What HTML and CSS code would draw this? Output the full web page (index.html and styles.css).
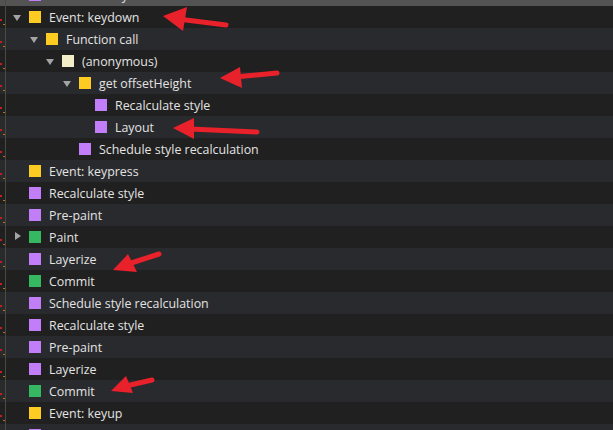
FILE: index.html
```html
<!DOCTYPE html>
<html>
<head>
<meta charset="utf-8">
<link rel="stylesheet" href="styles.css">
</head>
<body>
<div class="panel">
  <div class="gutter"></div>
  <div class="tree">
    <div class="row sel l0"><span class="tw"></span><span class="sq purple"></span><span class="lbl">Invalidate Layout</span></div>
    <div class="row dark l0"><span class="tw down"></span><span class="sq yellow"></span><span class="lbl">Event: keydown</span></div>
    <div class="row light l1"><span class="tw down"></span><span class="sq yellow"></span><span class="lbl">Function call</span></div>
    <div class="row dark l2"><span class="tw down"></span><span class="sq cream"></span><span class="lbl">(anonymous)</span></div>
    <div class="row light l3"><span class="tw down"></span><span class="sq yellow"></span><span class="lbl">get offsetHeight</span></div>
    <div class="row dark l4"><span class="tw"></span><span class="sq purple"></span><span class="lbl">Recalculate style</span></div>
    <div class="row light l4"><span class="tw"></span><span class="sq purple"></span><span class="lbl">Layout</span></div>
    <div class="row dark l3"><span class="tw"></span><span class="sq purple"></span><span class="lbl">Schedule style recalculation</span></div>
    <div class="row light l0"><span class="tw"></span><span class="sq yellow"></span><span class="lbl">Event: keypress</span></div>
    <div class="row dark l0"><span class="tw"></span><span class="sq purple"></span><span class="lbl">Recalculate style</span></div>
    <div class="row light l0"><span class="tw"></span><span class="sq purple"></span><span class="lbl">Pre-paint</span></div>
    <div class="row dark l0"><span class="tw right"></span><span class="sq green"></span><span class="lbl">Paint</span></div>
    <div class="row light l0"><span class="tw"></span><span class="sq purple"></span><span class="lbl">Layerize</span></div>
    <div class="row dark l0"><span class="tw"></span><span class="sq green"></span><span class="lbl">Commit</span></div>
    <div class="row light l0"><span class="tw"></span><span class="sq purple"></span><span class="lbl">Schedule style recalculation</span></div>
    <div class="row dark l0"><span class="tw"></span><span class="sq purple"></span><span class="lbl">Recalculate style</span></div>
    <div class="row light l0"><span class="tw"></span><span class="sq purple"></span><span class="lbl">Pre-paint</span></div>
    <div class="row dark l0"><span class="tw"></span><span class="sq purple"></span><span class="lbl">Layerize</span></div>
    <div class="row light l0"><span class="tw"></span><span class="sq green"></span><span class="lbl">Commit</span></div>
    <div class="row dark l0"><span class="tw"></span><span class="sq yellow"></span><span class="lbl">Event: keyup</span></div>
    <div class="row light l0"><span class="tw"></span><span class="sq purple"></span><span class="lbl">Layout</span></div>
  </div>
  <svg class="arrows" width="613" height="430" viewBox="0 0 613 430">
    <g fill="#e8212b" stroke="#e8212b" stroke-linecap="round" stroke-width="5">
      <line x1="178" y1="19" x2="226" y2="25"/>
      <polygon stroke="none" points="163,16 187,7 183,31"/>
      <line x1="235" y1="77" x2="277" y2="73"/>
      <polygon stroke="none" points="220,78 240,67 242,88"/>
      <line x1="190" y1="129" x2="257" y2="132"/>
      <polygon stroke="none" points="173,128 194,118 194,139"/>
      <line x1="128" y1="264" x2="159" y2="254"/>
      <polygon stroke="none" points="113,270 128,254 137,272"/>
      <line x1="126" y1="386" x2="152" y2="380"/>
      <polygon stroke="none" points="111,391 126,376 133,393"/>
    </g>
  </svg>
</div>
</body>
</html>
```
FILE: styles.css
```css
html, body {
  margin: 0;
  padding: 0;
  background: #202020;
}
.panel {
  position: relative;
  width: 613px;
  height: 430px;
  overflow: hidden;
  display: flex;
}
.gutter {
  width: 5px;
  flex: none;
  border-right: 1px solid #4b4a3f;
  position: relative;
  z-index: 1;
  background-image:
    repeating-linear-gradient(to bottom, transparent 0 13px, #c41f1f 13px 15px, transparent 15px 22px);
  background-size: 2px 22px;
  background-repeat: repeat-y;
  background-position: 0 6px;
}
.gutter::after {
  content: "";
  position: absolute;
  left: 3px;
  top: 0;
  width: 2px;
  height: 100%;
  background-image: repeating-linear-gradient(to bottom, transparent 0 18px, #b9740f 18px 19px, transparent 19px 22px);
  background-position: 0 6px;
}
.tree {
  flex: 1;
  margin-top: -16px;
  margin-left: -6px;
  display: flex;
  flex-direction: column;
}
.row {
  height: 22px;
  flex: none;
  display: flex;
  align-items: center;
  font-family: "Segoe UI", "Open Sans", "Noto Sans", sans-serif;
  font-size: 12.4px;
  color: #e3e3e3;
  white-space: nowrap;
}
.dark { background: #202020; }
.light { background: #292a2d; }
.sel { background: #535353; }
.l0 { padding-left: 13px; }
.l1 { padding-left: 30px; }
.l2 { padding-left: 46px; }
.l3 { padding-left: 63px; }
.l4 { padding-left: 79px; }
.tw {
  width: 16px;
  height: 12px;
  flex: none;
  position: relative;
}
.tw.down::before {
  content: "";
  position: absolute;
  left: 0;
  top: 4px;
  border-left: 4px solid transparent;
  border-right: 4px solid transparent;
  border-top: 6px solid #a4a4a4;
}
.tw.right::before {
  content: "";
  position: absolute;
  left: 2px;
  top: 1px;
  border-top: 4px solid transparent;
  border-bottom: 4px solid transparent;
  border-left: 6px solid #a4a4a4;
}
.sq {
  width: 12px;
  height: 12px;
  flex: none;
  margin-right: 8px;
}
.yellow { background: #fdcc22; }
.purple { background: #c27ef8; }
.green { background: #36b862; }
.cream { background: #f3edc8; }
.lbl {
  line-height: 22px;
  padding-top: 2px;
}
.arrows {
  position: absolute;
  left: 0;
  top: 0;
  z-index: 2;
}
```
